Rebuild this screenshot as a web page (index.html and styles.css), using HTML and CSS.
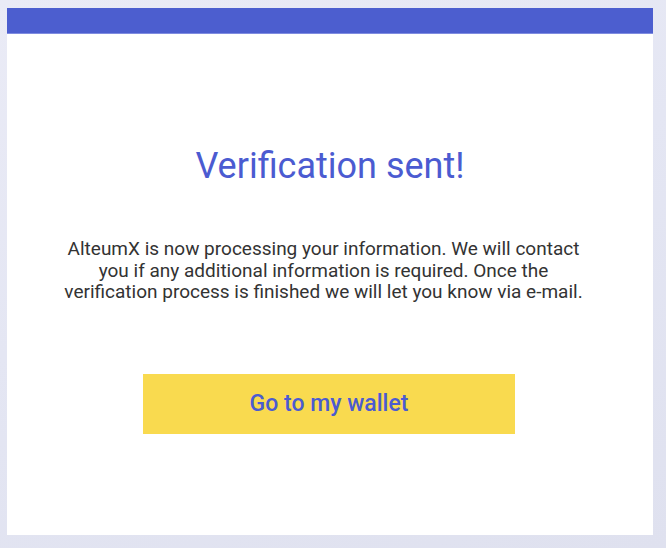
FILE: index.html
```html
<!DOCTYPE html>
<html>
<head>
<meta charset="utf-8">
<link rel="stylesheet" href="styles.css">
</head>
<body>
<div class="card">
  <div class="card-bar"></div>
  <div class="card-body">
    <h1 class="title">Verification sent!</h1>
    <p class="message">AlteumX is now processing your information. We will contact<br>you if any additional information is required. Once the<br>verification process is finished we will let you know via e-mail.</p>
    <button class="btn">Go to my wallet</button>
  </div>
</div>
</body>
</html>
```
FILE: styles.css
```css
html, body {
  margin: 0;
  padding: 0;
}
body {
  width: 666px;
  height: 548px;
  overflow: hidden;
  background: linear-gradient(160deg, #eaebf6 0%, #e4e6f3 45%, #dfe1ef 100%);
  font-family: Roboto, "Noto Sans", sans-serif;
  padding: 8px 13px 13px 7px;
  box-sizing: border-box;
}
.card {
  width: 646px;
  height: 527px;
  background: #ffffff;
  display: flex;
  flex-direction: column;
}
.card-bar {
  height: 26px;
  background: #4c5ecf;
  border-bottom: 1px solid #7f8ce0;
  box-sizing: border-box;
}
.card-body {
  display: flex;
  flex-direction: column;
  align-items: center;
  padding-top: 111px;
}
.title {
  margin: 0;
  font-size: 36px;
  line-height: 42px;
  font-weight: 400;
  color: #4b5bd1;
}
.message {
  margin: 51px 0 0;
  padding-right: 13px;
  font-size: 19px;
  line-height: 21.5px;
  color: #333333;
  text-align: center;
}
.btn {
  margin: 71px 2px 0 0;
  width: 372px;
  height: 60px;
  border: none;
  background: #f9da4f;
  color: #4b5bd1;
  font-family: Roboto, "Noto Sans", sans-serif;
  font-size: 23px;
  font-weight: 500;
  padding: 0;
  cursor: pointer;
}
```
